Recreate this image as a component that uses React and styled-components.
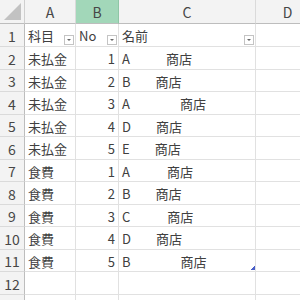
import styled, { createGlobalStyle } from "styled-components";

const Global = createGlobalStyle`
  html, body {
    margin: 0;
    padding: 0;
    background: #fff;
    overflow: hidden;
  }
  * {
    box-sizing: border-box;
  }
`;

const Frame = styled.div`
  width: 300px;
  height: 300px;
  overflow: hidden;
`;

const Sheet = styled.div`
  display: grid;
  grid-template-columns: 25px 51px 43px 137px 64px;
  grid-template-rows: 24px 23px 23px 22px 23px 22px 23px 22px 23px 22px 23px 22px 23px 23px;
  font-family: "Noto Sans CJK JP", "Noto Sans", sans-serif;
  font-size: 13px;
  color: #404040;
`;

const Corner = styled.div`
  position: relative;
  background: #f3f3f3;
  border-right: 1px solid #cfcfcf;
  border-bottom: 1px solid #bdbdbd;

  svg {
    position: absolute;
    right: 3px;
    bottom: 3px;
  }
`;

const ColHead = styled.div`
  display: flex;
  align-items: center;
  justify-content: center;
  background: ${(p) => (p.$selected ? "#a2d7b9" : "#f3f3f3")};
  border-right: 1px solid ${(p) => (p.$selected ? "#8fc6a6" : "#dadada")};
  border-bottom: 1px solid #bdbdbd;
  color: #474747;
  font-size: 14px;
  padding-top: 1px;
`;

const RowHead = styled.div`
  display: flex;
  align-items: center;
  justify-content: center;
  background: #f3f3f3;
  border-right: 1px solid #bdbdbd;
  border-bottom: 1px solid #dadada;
  color: #474747;
  font-size: 14px;
  padding-top: 1px;
`;

const Cell = styled.div`
  position: relative;
  display: flex;
  align-items: center;
  justify-content: ${(p) => (p.$right ? "flex-end" : "flex-start")};
  padding: 1px 3px 0 3px;
  border-right: 1px solid #e1e1e1;
  border-bottom: 1px solid #e1e1e1;
  white-space: nowrap;
`;

const Shop = styled.span`
  margin-left: ${(p) => p.$offset}px;
`;

const FilterBtn = styled.span`
  position: absolute;
  right: 1px;
  bottom: 1px;
  width: 10px;
  height: 10px;
  border: 1px solid #c4c4c4;
  background: #fff;
  display: flex;
  align-items: center;
  justify-content: center;

  &::after {
    content: "";
    border-left: 2px solid transparent;
    border-right: 2px solid transparent;
    border-top: 2px solid #666;
  }
`;

const ResizeMark = styled.span`
  position: absolute;
  right: 0px;
  bottom: 1px;
  width: 4px;
  height: 4px;
  background: linear-gradient(135deg, transparent 50%, #4a5fc8 50%);
`;

const rows = [
  { cat: "未払金", no: 1, name: "A", offset: 36 },
  { cat: "未払金", no: 2, name: "B", offset: 25 },
  { cat: "未払金", no: 3, name: "A", offset: 50 },
  { cat: "未払金", no: 4, name: "D", offset: 25 },
  { cat: "未払金", no: 5, name: "E", offset: 25 },
  { cat: "食費", no: 1, name: "A", offset: 37 },
  { cat: "食費", no: 2, name: "B", offset: 25 },
  { cat: "食費", no: 3, name: "C", offset: 37 },
  { cat: "食費", no: 4, name: "D", offset: 25 },
  { cat: "食費", no: 5, name: "B", offset: 50 },
];

export default function App() {
  return (
    <Frame>
      <Global />
      <Sheet>
        <Corner>
          <svg width="17" height="17" viewBox="0 0 17 17">
            <polygon points="17,0 17,17 0,17" fill="#c2c2c2" />
          </svg>
        </Corner>
        <ColHead>A</ColHead>
        <ColHead $selected>B</ColHead>
        <ColHead>C</ColHead>
        <ColHead>D</ColHead>

        <RowHead>1</RowHead>
        <Cell>
          科目
          <FilterBtn />
        </Cell>
        <Cell>
          No
          <FilterBtn />
        </Cell>
        <Cell>
          名前
          <FilterBtn />
        </Cell>
        <Cell />

        {rows.map((r, i) => (
          <Row key={i} index={i + 2} row={r} last={i === rows.length - 1} />
        ))}

        <RowHead>12</RowHead>
        <Cell />
        <Cell />
        <Cell />
        <Cell />

        <RowHead />
        <Cell />
        <Cell />
        <Cell />
        <Cell />
      </Sheet>
    </Frame>
  );
}

function Row({ index, row, last }) {
  return (
    <>
      <RowHead>{index}</RowHead>
      <Cell>{row.cat}</Cell>
      <Cell $right>{row.no}</Cell>
      <Cell>
        {row.name}
        <Shop $offset={row.offset}>商店</Shop>
        {last && <ResizeMark />}
      </Cell>
      <Cell />
    </>
  );
}
